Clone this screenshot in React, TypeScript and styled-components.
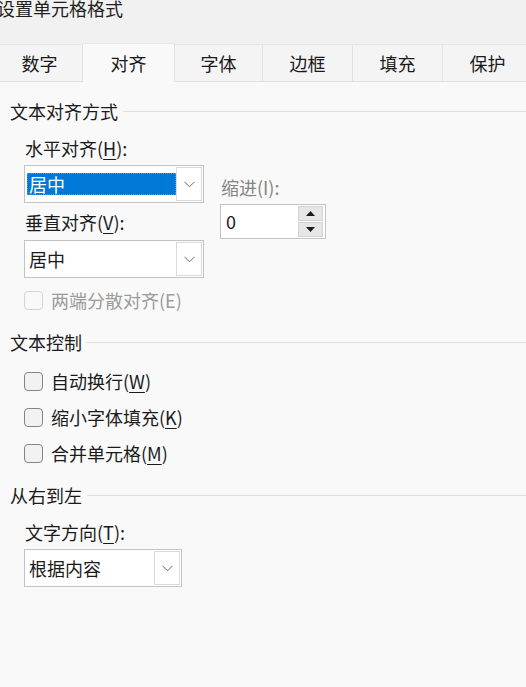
import styled, { createGlobalStyle } from "styled-components";

const GlobalStyle = createGlobalStyle`
  html, body {
    margin: 0;
    padding: 0;
    background: #f9f9f9;
    overflow: hidden;
  }
  body {
    font-family: "Noto Sans CJK SC", "Noto Sans", sans-serif;
    font-size: 18px;
    color: #1b1b1b;
  }
`;

const Window = styled.div`
  width: 526px;
  height: 687px;
  display: flex;
  flex-direction: column;
  background: #f9f9f9;
`;

const TitleBar = styled.div`
  height: 44px;
  background: #f1f1f1;
  box-sizing: border-box;
  overflow: hidden;
`;

const Title = styled.div`
  margin: -2px 0 0 -3px;
  line-height: 20px;
  font-size: 18px;
  color: #1f1f1f;
`;

const TabBar = styled.div`
  display: flex;
  height: 37px;
  margin-left: -3px;
  background: #f1f1f1;
  border-bottom: 1px solid #e0e0e0;
`;

const Tab = styled.div<{ $w: number; $active?: boolean }>`
  flex: none;
  width: ${({ $w }) => $w}px;
  box-sizing: border-box;
  display: flex;
  align-items: center;
  justify-content: center;
  font-size: 18px;
  color: #1a1a1a;
  background: ${({ $active }) => ($active ? "#f9f9f9" : "#f4f4f4")};
  border-top: 1px solid ${({ $active }) => ($active ? "#e8e8e8" : "#e6e6e6")};
  border-right: 1px solid #e2e2e2;
  height: ${({ $active }) => ($active ? 39 : 37)}px;
  margin-top: ${({ $active }) => ($active ? -1 : 0)}px;
  position: relative;
  z-index: ${({ $active }) => ($active ? 1 : 0)};
`;

const Panel = styled.div`
  display: flex;
  flex-direction: column;
  padding-left: 10px;
`;

const GroupHeader = styled.div<{ $top: number }>`
  display: flex;
  align-items: center;
  height: 24px;
  margin-top: ${({ $top }) => $top}px;
  &::after {
    content: "";
    flex: 1;
    height: 1px;
    background: #dedede;
    margin-left: 5px;
  }
`;

const GroupBody = styled.div`
  display: flex;
  flex-direction: column;
  padding-left: 14px;
`;

const Label = styled.div<{ $top: number; $muted?: boolean }>`
  height: 24px;
  line-height: 24px;
  padding-left: 1px;
  margin-top: ${({ $top }) => $top}px;
  color: ${({ $muted }) => ($muted ? "#858585" : "#1b1b1b")};
  u {
    text-underline-offset: 3px;
    text-decoration-thickness: 1px;
  }
`;

const Row = styled.div`
  display: flex;
  align-items: flex-start;
`;

const Column = styled.div<{ $pad?: number; $gap?: number }>`
  display: flex;
  flex-direction: column;
  padding-top: ${({ $pad }) => $pad ?? 0}px;
  margin-left: ${({ $gap }) => $gap ?? 0}px;
`;

const SelectBox = styled.div<{ $w: number; $top: number }>`
  width: ${({ $w }) => $w}px;
  height: 38px;
  margin-top: ${({ $top }) => $top}px;
  box-sizing: border-box;
  border: 1px solid #c3c3c3;
  background: #ffffff;
  display: flex;
  align-items: stretch;
  padding: 1px;
`;

const SelectValue = styled.div<{ $selected?: boolean }>`
  flex: 1;
  display: flex;
  align-items: center;
  padding-left: 3px;
  ${({ $selected }) =>
    $selected
      ? `
    margin: 6px 0 6px 1px;
    background: #0078d7;
    color: #ffffff;
    outline: 1px dotted #4a9ae0;
    outline-offset: -1px;
    padding-left: 2px;
  `
      : `color: #1b1b1b;`}
`;

const DropButton = styled.div`
  width: 26px;
  box-sizing: border-box;
  border: 1px solid #dadada;
  background: #ffffff;
  display: flex;
  align-items: center;
  justify-content: center;
`;

const SpinBox = styled.div`
  width: 106px;
  height: 35px;
  margin-top: 5px;
  box-sizing: border-box;
  border: 1px solid #c3c3c3;
  background: #ffffff;
  display: flex;
  align-items: stretch;
  padding: 1px 2px 1px 0;
`;

const SpinValue = styled.div`
  flex: 1;
  display: flex;
  align-items: center;
  padding-left: 5px;
  margin-top: -2px;
`;

const SpinButtons = styled.div`
  width: 25px;
  display: flex;
  flex-direction: column;
  gap: 1px;
`;

const SpinButton = styled.div`
  flex: 1;
  background: #e6e6e6;
  border: 1px solid #d2d2d2;
  display: flex;
  align-items: center;
  justify-content: center;
`;

const CheckRow = styled.label<{ $top: number; $disabled?: boolean }>`
  display: flex;
  align-items: center;
  height: 24px;
  margin-top: ${({ $top }) => $top}px;
  gap: 8px;
  color: ${({ $disabled }) => ($disabled ? "#9b9b9b" : "#1b1b1b")};
  u {
    text-underline-offset: 3px;
    text-decoration-thickness: 1px;
  }
`;

const Box = styled.span<{ $disabled?: boolean }>`
  flex: none;
  width: 19px;
  height: 19px;
  box-sizing: border-box;
  border-radius: 4px;
  border: 1px solid ${({ $disabled }) => ($disabled ? "#d4d4d4" : "#858585")};
  background: ${({ $disabled }) => ($disabled ? "#f9f9f9" : "#f2f2f2")};
`;

const Chevron = () => (
  <svg width="11" height="7" viewBox="0 0 11 7">
    <path d="M0.5 0.8 L5.5 5.8 L10.5 0.8" fill="none" stroke="#6a6a6a" strokeWidth="1" />
  </svg>
);

const Arrow = ({ up }: { up?: boolean }) => (
  <svg width="9" height="5" viewBox="0 0 9 5">
    <path d={up ? "M0 5 L4.5 0 L9 5 Z" : "M0 0 L4.5 5 L9 0 Z"} fill="#1a1a1a" />
  </svg>
);

const Select = ({
  value,
  width,
  top,
  selected,
}: {
  value: string;
  width: number;
  top: number;
  selected?: boolean;
}) => (
  <SelectBox $w={width} $top={top}>
    <SelectValue $selected={selected}>{value}</SelectValue>
    <DropButton>
      <Chevron />
    </DropButton>
  </SelectBox>
);

const tabs = [
  { name: "数字", w: 86 },
  { name: "对齐", w: 92, active: true },
  { name: "字体", w: 88 },
  { name: "边框", w: 90 },
  { name: "填充", w: 90 },
  { name: "保护", w: 90 },
];

export default function App() {
  return (
    <Window>
      <GlobalStyle />
      <TitleBar>
        <Title>设置单元格格式</Title>
      </TitleBar>
      <TabBar>
        {tabs.map((t) => (
          <Tab key={t.name} $w={t.w} $active={t.active}>
            {t.name}
          </Tab>
        ))}
      </TabBar>
      <Panel>
        <GroupHeader $top={17}>文本对齐方式</GroupHeader>
        <GroupBody>
          <Label $top={13}>
            水平对齐(<u>H</u>):
          </Label>
          <Row>
            <Column>
              <Select value="居中" width={180} top={5} selected />
              <Label $top={7}>
                垂直对齐(<u>V</u>):
              </Label>
              <Select value="居中" width={180} top={6} />
            </Column>
            <Column $pad={15} $gap={16}>
              <Label $top={0} $muted>
                缩进(I):
              </Label>
              <SpinBox>
                <SpinValue>0</SpinValue>
                <SpinButtons>
                  <SpinButton>
                    <Arrow up />
                  </SpinButton>
                  <SpinButton>
                    <Arrow />
                  </SpinButton>
                </SpinButtons>
              </SpinBox>
            </Column>
          </Row>
          <CheckRow $top={10} $disabled>
            <Box $disabled />
            两端分散对齐(E)
          </CheckRow>
        </GroupBody>

        <GroupHeader $top={18}>文本控制</GroupHeader>
        <GroupBody>
          <CheckRow $top={15}>
            <Box />
            <span>
              自动换行(<u>W</u>)
            </span>
          </CheckRow>
          <CheckRow $top={12}>
            <Box />
            <span>
              缩小字体填充(<u>K</u>)
            </span>
          </CheckRow>
          <CheckRow $top={12}>
            <Box />
            <span>
              合并单元格(<u>M</u>)
            </span>
          </CheckRow>
        </GroupBody>

        <GroupHeader $top={18}>从右到左</GroupHeader>
        <GroupBody>
          <Label $top={13}>
            文字方向(<u>T</u>):
          </Label>
          <Select value="根据内容" width={158} top={5} />
        </GroupBody>
      </Panel>
    </Window>
  );
}
